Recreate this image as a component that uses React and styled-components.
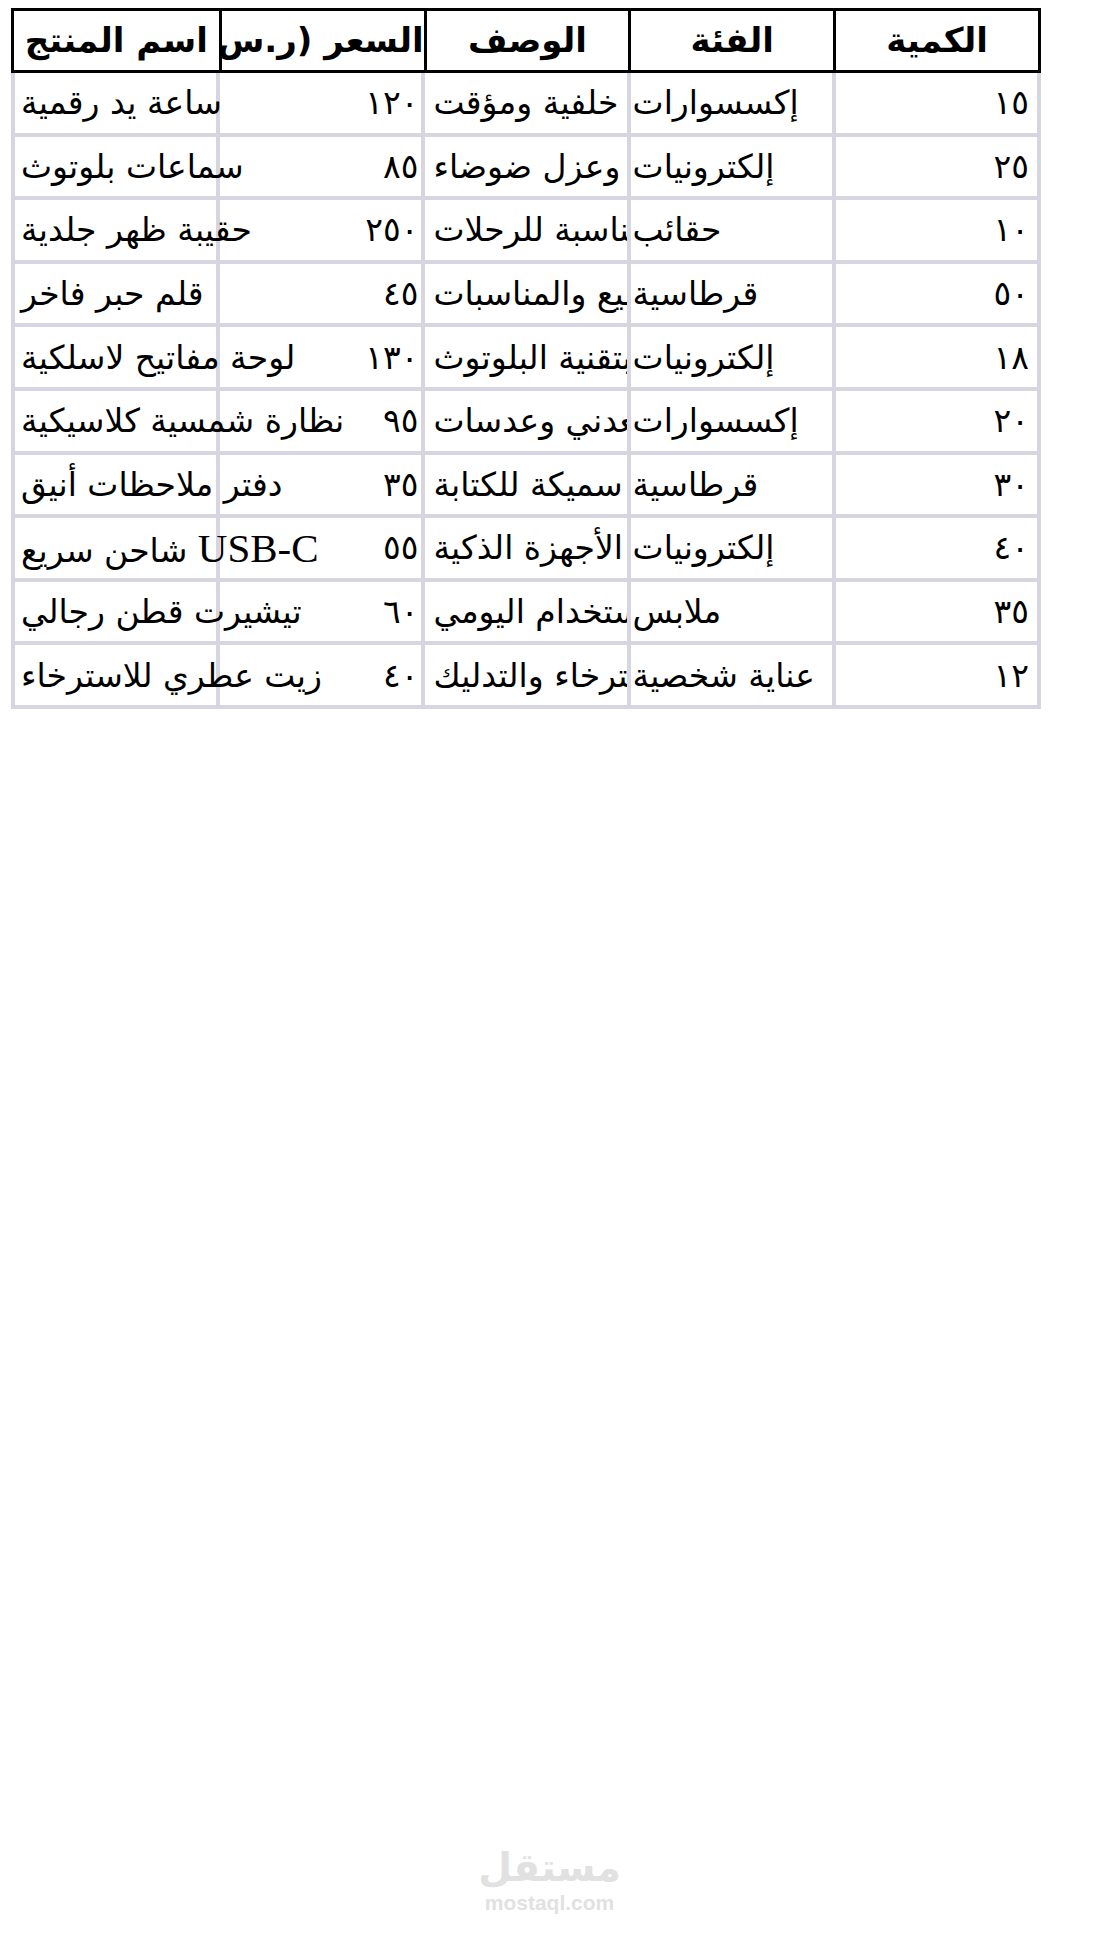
import React from "react";
import styled, { createGlobalStyle } from "styled-components";

const GlobalStyle = createGlobalStyle`
  html, body { margin: 0; padding: 0; background: #ffffff; }
  body {
    font-family: "DejaVu Sans", sans-serif;
    color: #000000;
  }
`;

const GRID = "#d7d6e0";

const Page = styled.div`
  width: 1099px;
  height: 1954px;
  display: flex;
  flex-direction: column;
  background: #ffffff;
`;

const Table = styled.div`
  width: 1030px;
  margin: 8px 0 0 11px;
  display: flex;
  flex-direction: column;
`;

const HeaderRow = styled.div`
  display: grid;
  grid-template-columns: repeat(5, 1fr);
  height: 65px;
  box-sizing: border-box;
  border: 3px solid #000000;
`;

const HeadCell = styled.div`
  border-left: ${(p) => (p.$first ? "none" : "3px solid #000000")};
  direction: rtl;
  text-align: center;
  white-space: nowrap;
  overflow: hidden;
  line-height: 59px;
  font-size: 34px;
  font-weight: 700;
`;

const Body = styled.div`
  display: grid;
  grid-template-columns: repeat(5, 1fr);
  grid-auto-rows: 63.6px;
  border-left: 4px solid ${GRID};
`;

const Cell = styled.div`
  box-sizing: border-box;
  border-right: 4px solid ${GRID};
  border-bottom: 4px solid ${GRID};
  display: flex;
  align-items: center;
  justify-content: ${(p) => (p.$end ? "flex-end" : "flex-start")};
  padding: 0 ${(p) => p.$pr || 0}px 0 ${(p) => p.$pl || 0}px;
  white-space: nowrap;
  overflow: ${(p) => (p.$clip ? "hidden" : "visible")};
  font-size: 33px;
  min-width: 0;
`;

const Txt = styled.span`
  flex-shrink: 0;
  white-space: nowrap;
`;

const Num = styled.span`
  flex-shrink: 0;
  white-space: nowrap;
  font-size: 33px;
  letter-spacing: 7px;
`;

const Latin = styled.span`
  font-family: "Liberation Serif", "Times New Roman", serif;
  font-size: 41px;
`;

const Watermark = styled.div`
  align-self: center;
  margin-top: 1136px;
  display: flex;
  flex-direction: column;
  align-items: center;
  color: #e1e1e1;
`;

const WLogo = styled.div`
  direction: rtl;
  font-family: "DejaVu Sans", sans-serif;
  font-weight: 700;
  font-size: 39px;
  line-height: 46px;
`;

const WDomain = styled.div`
  font-family: "Liberation Sans", Arial, sans-serif;
  font-weight: 700;
  font-size: 21px;
  line-height: 24px;
`;

const headers = ["اسم المنتج", "السعر (ر.س)", "الوصف", "الفئة", "الكمية"];

const rows = [
  { name: "ساعة يد رقمية", price: "١٢٠", desc: "شاشة رقمية بإضاءة خلفية ومؤقت", cat: "إكسسوارات", qty: "١٥" },
  { name: "سماعات بلوتوث", price: "٨٥", desc: "صوت نقي وبطارية طويلة وعزل ضوضاء", cat: "إلكترونيات", qty: "٢٥" },
  { name: "حقيبة ظهر جلدية", price: "٢٥٠", desc: "جلد طبيعي بتصميم أنيق ومناسبة للرحلات", cat: "حقائب", qty: "١٠" },
  { name: "قلم حبر فاخر", price: "٤٥", desc: "قلم معدني أنيق مثالي للتوقيع والمناسبات", cat: "قرطاسية", qty: "٥٠" },
  { name: "لوحة مفاتيح لاسلكية", price: "١٣٠", desc: "لوحة مفاتيح لاسلكية تعمل بتقنية البلوتوث", cat: "إلكترونيات", qty: "١٨" },
  { name: "نظارة شمسية كلاسيكية", price: "٩٥", desc: "حماية من الأشعة بإطار معدني وعدسات", cat: "إكسسوارات", qty: "٢٠" },
  { name: "دفتر ملاحظات أنيق", price: "٣٥", desc: "غلاف جلدي وأوراق سميكة للكتابة", cat: "قرطاسية", qty: "٣٠" },
  { name: <>شاحن سريع <Latin>USB-C</Latin></>, price: "٥٥", desc: "شحن سريع ومتوافق مع جميع الأجهزة الذكية", cat: "إلكترونيات", qty: "٤٠" },
  { name: "تيشيرت قطن رجالي", price: "٦٠", desc: "قطن ناعم ومريح مناسب للاستخدام اليومي", cat: "ملابس", qty: "٣٥" },
  { name: "زيت عطري للاسترخاء", price: "٤٠", desc: "زيت طبيعي بروائح مهدئة للاسترخاء والتدليك", cat: "عناية شخصية", qty: "١٢" },
];

export default function App() {
  return (
    <Page>
      <GlobalStyle />
      <Table>
        <HeaderRow>
          {headers.map((h, i) => (
            <HeadCell key={i} $first={i === 0}>{h}</HeadCell>
          ))}
        </HeaderRow>
        <Body>
          {rows.map((r, i) => (
            <React.Fragment key={i}>
              <Cell $pl={6}><Txt>{r.name}</Txt></Cell>
              <Cell $end $pr={3}><Num>{r.price}</Num></Cell>
              <Cell $clip $pl={8}><Txt>{r.desc}</Txt></Cell>
              <Cell $pl={2}><Txt>{r.cat}</Txt></Cell>
              <Cell $end $pr={8}><Num>{r.qty}</Num></Cell>
            </React.Fragment>
          ))}
        </Body>
      </Table>
      <Watermark>
        <WLogo>مستقل</WLogo>
        <WDomain>mostaql.com</WDomain>
      </Watermark>
    </Page>
  );
}
